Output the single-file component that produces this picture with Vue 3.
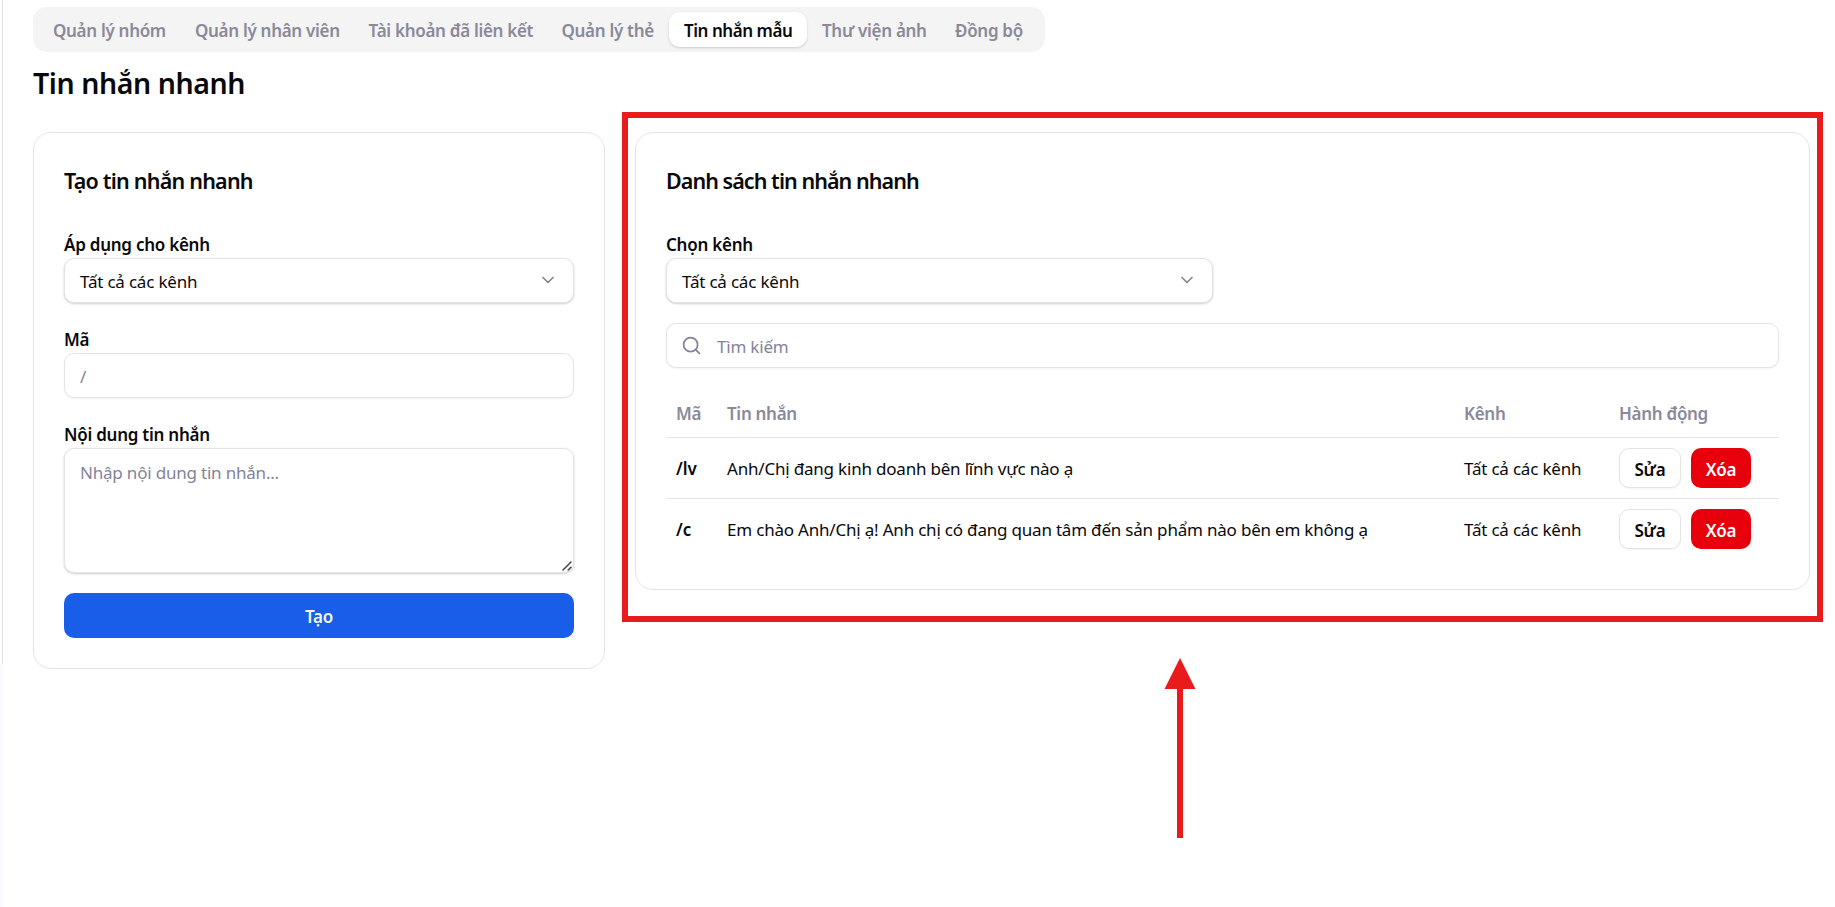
<template>
  <div class="page">
    <div class="rail"><div class="rail-line"></div></div>
    <main>
      <div class="tabs">
        <button v-for="tab in tabs" class="tab" :class="{ active: tab === activeTab }" @click="activeTab = tab">{{ tab }}</button>
      </div>
      <h1>Tin nhắn nhanh</h1>
      <div class="columns">
        <section class="card">
          <h2 class="wide">Tạo tin nhắn nhanh</h2>
          <label>Áp dụng cho kênh</label>
          <div class="select">
            <span>Tất cả các kênh</span>
            <svg class="chevron" viewBox="0 0 24 24"><path d="m6 9 6 6 6-6" /></svg>
          </div>
          <label class="next">Mã</label>
          <input v-model="code" class="field" placeholder="/">
          <label class="next">Nội dung tin nhắn</label>
          <div class="area">
            <textarea v-model="content" class="field" placeholder="Nhập nội dung tin nhắn..."></textarea>
            <svg class="grip" viewBox="0 0 10 10"><path d="M1 9 9 1M6.2 9 9 6.2" /></svg>
          </div>
          <button class="create">Tạo</button>
        </section>
        <section class="card list">
          <h2>Danh sách tin nhắn nhanh</h2>
          <label>Chọn kênh</label>
          <div class="select half">
            <span>Tất cả các kênh</span>
            <svg class="chevron" viewBox="0 0 24 24"><path d="m6 9 6 6 6-6" /></svg>
          </div>
          <div class="field search">
            <svg viewBox="0 0 24 24"><circle cx="11" cy="11" r="8" /><path d="m21 21-4.3-4.3" /></svg>
            <input v-model="search" placeholder="Tìm kiếm">
          </div>
          <table>
            <thead>
              <tr>
                <th class="c-code">Mã</th>
                <th>Tin nhắn</th>
                <th class="c-channel">Kênh</th>
                <th class="c-action">Hành động</th>
              </tr>
            </thead>
            <tbody>
              <tr v-for="row in rows">
                <td class="code">{{ row.code }}</td>
                <td>{{ row.text }}</td>
                <td>{{ row.channel }}</td>
                <td>
                  <div class="actions">
                    <button class="edit">Sửa</button>
                    <button class="delete">Xóa</button>
                  </div>
                </td>
              </tr>
            </tbody>
          </table>
        </section>
      </div>
    </main>
    <div class="highlight"></div>
    <svg class="arrow" viewBox="0 0 32 180">
      <path d="M16 0 31.5 31H19v149h-6V31H.5z" />
    </svg>
  </div>
</template>
<script setup>
  import { ref } from 'vue';

  const tabs = ['Quản lý nhóm', 'Quản lý nhân viên', 'Tài khoản đã liên kết', 'Quản lý thẻ', 'Tin nhắn mẫu', 'Thư viện ảnh', 'Đồng bộ'];
  const activeTab = ref('Tin nhắn mẫu');
  const code = ref('');
  const content = ref('');
  const search = ref('');
  const rows = [
    { code: '/lv', text: 'Anh/Chị đang kinh doanh bên lĩnh vực nào ạ', channel: 'Tất cả các kênh' },
    { code: '/c', text: 'Em chào Anh/Chị ạ! Anh chị có đang quan tâm đến sản phẩm nào bên em không ạ', channel: 'Tất cả các kênh' },
  ];
</script>
<style>
  body {
    background: #fff;
    overflow: hidden;
  }
</style>
<style scoped>
  .page {
    position: relative;
    display: flex;
    height: 907px;
    color: #09090b;
    font-family: "Noto Sans", "Open Sans", sans-serif;
    font-size: 17px;
    letter-spacing: -0.2px;
  }

  .page * {
    box-sizing: border-box;
  }

  button, input, textarea {
    font: inherit;
    letter-spacing: inherit;
    color: inherit;
    border: 0;
    margin: 0;
    outline: 0;
  }

  .rail {
    width: 3px;
    background: #f9fafb;
  }

  .rail-line {
    height: 664px;
    background: #fff;
    border-right: 1px solid #e4e4e7;
  }

  main {
    padding: 7px 0 0 30px;
  }

  .tabs {
    display: grid;
    grid-template-columns: 142px 173.5px 193px 122.5px 138px 133px 100px;
    width: 1012px;
    height: 45px;
    padding: 5px;
    background: #f4f4f5;
    border-radius: 14px;
  }

  .tab {
    padding: 1px 0 0 15px;
    background: transparent;
    border-radius: 11px;
    color: #8a8999;
    font-weight: 600;
    text-align: left;
    white-space: nowrap;
    letter-spacing: -0.3px;
  }

  .tab.active {
    background: #fff;
    color: #09090b;
    box-shadow: 0 1px 3px rgba(0, 0, 0, .12), 0 1px 2px rgba(0, 0, 0, .06);
    letter-spacing: -0.45px;
  }

  h1 {
    margin: 11px 0 29px;
    font-size: 28.5px;
    line-height: 40px;
    font-weight: 600;
    letter-spacing: -0.43px;
  }

  .columns {
    display: grid;
    grid-template-columns: 572px 1175px;
    gap: 30px;
    align-items: start;
  }

  .card {
    padding: 30px;
    border: 1px solid #e4e4e7;
    border-radius: 18px;
  }

  h2 {
    margin: 0 0 33px;
    font-size: 21.5px;
    line-height: 36px;
    font-weight: 600;
    letter-spacing: -0.95px;
  }

  h2.wide {
    letter-spacing: -0.78px;
  }

  label {
    display: block;
    height: 26px;
    line-height: 25px;
    font-weight: 600;
    letter-spacing: -0.25px;
  }

  label.next {
    margin-top: 24px;
  }

  .select, .field {
    display: flex;
    align-items: center;
    width: 100%;
    height: 45px;
    padding: 1px 15px 0;
    border: 1px solid #e4e4e7;
    border-radius: 10px;
    background: #fff;
    box-shadow: 0 1px 2px rgba(0, 0, 0, .05);
  }

  .select {
    justify-content: space-between;
    box-shadow: 0 1px 3px rgba(0, 0, 0, .1), 0 1px 2px rgba(0, 0, 0, .1);
  }

  .select.half {
    width: 547px;
  }

  svg {
    fill: none;
    stroke: currentColor;
    stroke-width: 2;
    stroke-linecap: round;
    stroke-linejoin: round;
  }

  .chevron {
    width: 20px;
    height: 20px;
    margin-top: -2px;
    color: #858587;
  }

  ::placeholder {
    color: #84839a;
    opacity: 1;
  }

  .area {
    position: relative;
    height: 125px;
  }

  textarea.field {
    display: block;
    height: 125px;
    padding: 11px 15px;
    line-height: 25px;
    resize: vertical;
    box-shadow: 0 1px 3px rgba(0, 0, 0, .1), 0 1px 2px rgba(0, 0, 0, .1);
  }

  textarea::-webkit-resizer {
    background: transparent;
  }

  .grip {
    position: absolute;
    right: 2px;
    bottom: 2px;
    width: 10px;
    height: 10px;
    color: #444;
    stroke-width: 1.5;
    pointer-events: none;
  }

  .create {
    width: 100%;
    height: 45px;
    margin-top: 20px;
    padding-top: 2px;
    border-radius: 10px;
    background: #185ee8;
    color: #eff6ff;
    font-weight: 600;
  }

  .search {
    gap: 15px;
    margin: 20px 0;
    padding-left: 14px;
  }

  .search svg {
    width: 21px;
    height: 21px;
    margin-top: -2px;
    color: #84839a;
  }

  .search input {
    flex: 1;
    padding: 0;
    background: transparent;
  }

  table {
    width: 100%;
    table-layout: fixed;
    border-collapse: separate;
    border-spacing: 0;
  }

  th, td {
    padding: 0 10px;
    text-align: left;
    vertical-align: middle;
    white-space: nowrap;
  }

  th {
    height: 50px;
    padding-top: 1px;
    border-bottom: 1px solid #e4e4e7;
    color: #8a8999;
    font-weight: 600;
    letter-spacing: -0.3px;
  }

  td {
    height: 60px;
    padding-top: 1px;
  }

  tbody tr:first-child td {
    height: 61px;
    border-bottom: 1px solid #e4e4e7;
  }

  .c-code {
    width: 51px;
  }

  .c-channel {
    width: 155px;
  }

  .c-action {
    width: 170px;
  }

  .code {
    font-weight: 600;
    letter-spacing: 0;
  }

  .actions {
    display: flex;
    gap: 10px;
    margin-top: -1px;
  }

  .actions button {
    height: 40px;
    padding: 2px 0 0;
    border-radius: 10px;
    font-weight: 600;
  }

  .edit {
    width: 62px;
    background: #fff;
    border: 1px solid #e4e4e7;
    box-shadow: 0 1px 2px rgba(0, 0, 0, .05);
  }

  .delete {
    width: 60px;
    background: #e7000b;
    color: #fff;
  }

  .highlight {
    position: absolute;
    left: 622px;
    top: 112px;
    width: 1201px;
    height: 510px;
    border: 6px solid #e81c1c;
    pointer-events: none;
  }

  .arrow {
    position: absolute;
    left: 1164px;
    top: 658px;
    width: 32px;
    height: 180px;
    fill: #e81c1c;
    stroke: none;
  }
</style>
